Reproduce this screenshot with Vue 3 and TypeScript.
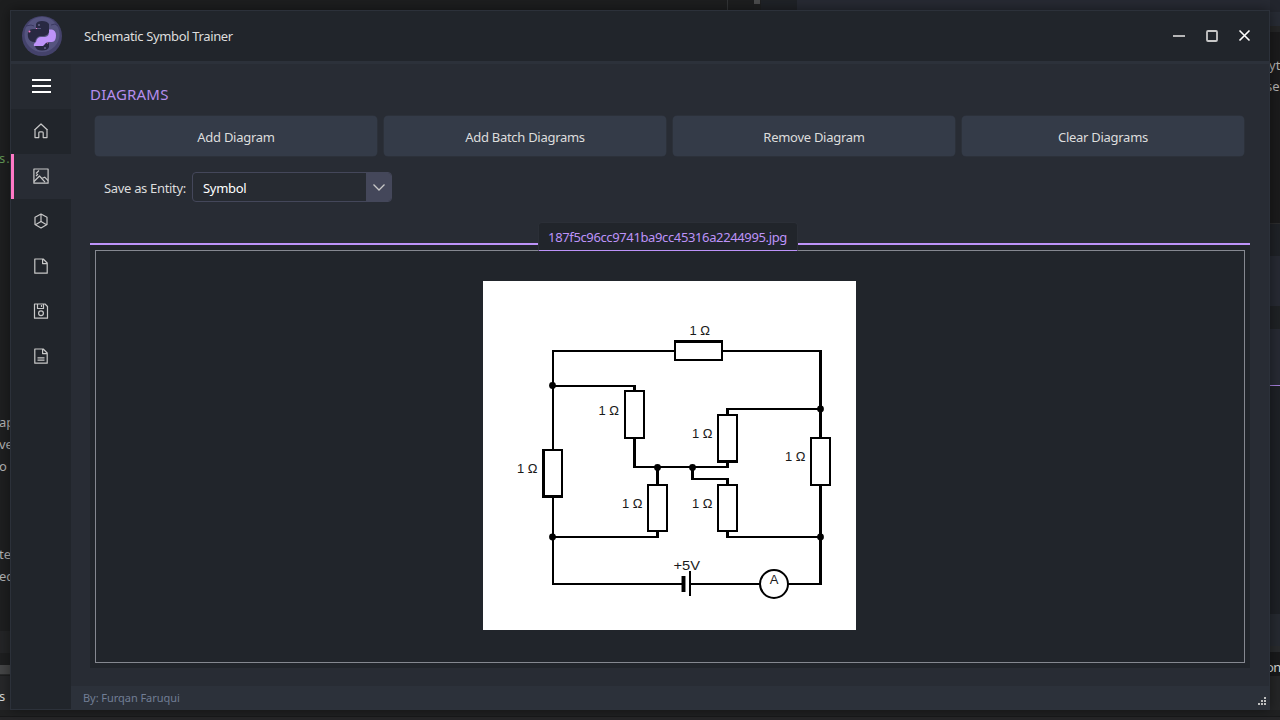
<script setup lang="ts">
interface Fragment { id: number; text: string; cls: string }
interface Rect { x: number; y: number; w: number; h: number }
interface Label { x: number; y: number; text: string; w: number }

const actions: string[] = ['Add Diagram', 'Add Batch Diagrams', 'Remove Diagram', 'Clear Diagrams']
const fragments: Fragment[] = [
  { id: 1, text: 's.', cls: 'f-green' },
  { id: 2, text: 'ap', cls: 'f-a' },
  { id: 3, text: 've', cls: 'f-b' },
  { id: 4, text: 'o', cls: 'f-c' },
  { id: 5, text: 'te', cls: 'f-d' },
  { id: 6, text: 'ed', cls: 'f-e' },
  { id: 7, text: 's', cls: 'f-f' },
  { id: 8, text: 'yt', cls: 'f-g' },
  { id: 9, text: 'se', cls: 'f-h' },
  { id: 10, text: 'on', cls: 'f-i' }
]
const menu: string[] = ['home', 'image', 'cube', 'file', 'save', 'doc']

const wires: Rect[] = [
  { x: 552, y: 350, w: 122, h: 2 }, { x: 723, y: 350, w: 98, h: 2 },
  { x: 552, y: 350, w: 2, h: 99 }, { x: 552, y: 498, w: 2, h: 87 },
  { x: 819, y: 350, w: 3, h: 87 }, { x: 819, y: 486, w: 3, h: 99 },
  { x: 552, y: 385, w: 84, h: 2 }, { x: 633, y: 385, w: 3, h: 6 },
  { x: 633, y: 438, w: 3, h: 30 }, { x: 633, y: 466, w: 96, h: 2 },
  { x: 726, y: 408, w: 95, h: 2 }, { x: 726, y: 408, w: 3, h: 6 },
  { x: 726, y: 462, w: 3, h: 6 }, { x: 656, y: 467, w: 3, h: 18 },
  { x: 691, y: 467, w: 3, h: 13 }, { x: 691, y: 478, w: 38, h: 2 },
  { x: 726, y: 478, w: 3, h: 7 }, { x: 656, y: 531, w: 3, h: 7 },
  { x: 552, y: 536, w: 107, h: 2 }, { x: 726, y: 531, w: 3, h: 7 },
  { x: 726, y: 536, w: 95, h: 2 }, { x: 552, y: 583, w: 130, h: 2 },
  { x: 690, y: 583, w: 70, h: 2 }, { x: 788, y: 583, w: 34, h: 2 },
  { x: 682, y: 576, w: 3, h: 16 }, { x: 689, y: 571, w: 2, h: 25 }
]
const outer: Rect[] = [
  { x: 674, y: 340, w: 49, h: 21 }, { x: 624, y: 390, w: 21, h: 49 },
  { x: 717, y: 414, w: 21, h: 49 }, { x: 810, y: 437, w: 21, h: 49 },
  { x: 542, y: 449, w: 21, h: 49 }, { x: 647, y: 484, w: 21, h: 48 },
  { x: 717, y: 484, w: 21, h: 48 }
]
const inner: Rect[] = [
  { x: 676, y: 343, w: 45, h: 16 }, { x: 626, y: 392, w: 17, h: 45 },
  { x: 719, y: 416, w: 17, h: 44 }, { x: 812, y: 439, w: 17, h: 45 },
  { x: 545, y: 451, w: 16, h: 44 }, { x: 649, y: 486, w: 17, h: 44 },
  { x: 719, y: 486, w: 17, h: 44 }
]
const nodes: [number, number][] = [
  [552.5, 385.5], [657.5, 467.5], [692.5, 467.5], [820.5, 409], [552.5, 537], [820.5, 537]
]
const labels: Label[] = [
  { x: 689.5, y: 335, text: '1 Ω', w: 20.5 }, { x: 598.5, y: 415, text: '1 Ω', w: 20.5 },
  { x: 692, y: 438, text: '1 Ω', w: 20.5 }, { x: 785, y: 461, text: '1 Ω', w: 20.5 },
  { x: 517, y: 473, text: '1 Ω', w: 20.5 }, { x: 622, y: 508, text: '1 Ω', w: 20.5 },
  { x: 692, y: 508, text: '1 Ω', w: 20.5 }, { x: 673.5, y: 570, text: '+5V', w: 26.5 }
]
</script>

<template>
  <div class="desktop">
    <div class="strip top-left"></div>
    <div class="strip top-gap"></div>
    <div class="strip top-scroll"></div>
    <div class="strip top-panel"></div>
    <div class="strip top-right"></div>
    <div class="strip bottom"></div>
    <div class="strip left-low"></div>
    <div class="strip left-bar"></div>
    <div class="strip left-end"></div>
    <div class="right-edge">
      <i class="r1"></i><i class="r2"></i><i class="r3"></i><i class="r4"></i><i class="r5"></i>
      <i class="r6"></i><i class="r7"></i><i class="r8"></i><i class="r9"></i><i class="r10"></i>
    </div>
    <span v-for="f in fragments" :key="f.id" class="frag" :class="f.cls">{{ f.text }}</span>

    <main class="window">
      <header class="titlebar">
        <svg class="logo" viewBox="0 0 40 40">
          <circle cx="20" cy="20" r="20" fill="#44426b" />
          <circle cx="20" cy="18.5" r="17.5" fill="#55547f" />
          <path d="M4 10l5-1 3 1M29 9l4-1 3 2" stroke="#3a3961" fill="none" />
          <path d="M14 8q1-3 6-3t7 3v7q0 4-5 5h-4q-4 1-5 6-6 0-7-5-1-8 5-8h8v-1h-5z" fill="#282942" />
          <path d="M27 13.500h3q4 1 4 6 0 6-4 6.500h-5l-3 4h-10q-1-2 2-4 1-5 5-5h4q5-1 4-7.500z" fill="#bd93f9" />
          <path d="M13 30h8l3-3h3v4q-1 3.500-7 3.500t-7-4.500z" fill="#282942" />
          <circle cx="17" cy="9" r="1" fill="#65638d" /><circle cx="23" cy="32" r="1" fill="#65638d" />
          <circle cx="7.500" cy="15.500" r="1" fill="#ff79c6" />
          <circle cx="14.500" cy="12.500" r=".6" fill="#ff79c6" /><circle cx="25.500" cy="27" r=".6" fill="#ff79c6" />
        </svg>
        <h1 class="title">Schematic Symbol Trainer</h1>
        <div class="controls">
          <svg viewBox="0 0 14 14"><path d="M1 7h12" /></svg>
          <svg viewBox="0 0 14 14"><rect x="2" y="2" width="10" height="10" rx="1" /></svg>
          <svg viewBox="0 0 14 14" class="close"><path d="M1.500 1.500l10 10M11.500 1.500L1.500 11.500" /></svg>
        </div>
      </header>

      <div class="body">
        <nav class="sidebar">
          <div class="burger"><i></i><i></i><i></i></div>
          <div v-for="m in menu" :key="m" class="item" :class="{ active: m === 'image' }">
            <svg viewBox="0 0 16 16">
              <path v-if="m === 'home'" d="M1.3 7.2L8 1l6.7 6.2M2 6.8V14.6h3.8V9.8q0-1 1-1h2.4q1 0 1 1v4.8H14V6.8" />
              <g v-else-if="m === 'image'">
                <rect x=".9" y="1" width="14.2" height="14.2" />
                <path d="M1 13.5L6.5 8l5.5 6.2M8.7 10.5L11.7 9.2l3.4 3.5M3 5.5l3-3M3 8l2-2" />
              </g>
              <path v-else-if="m === 'cube'" d="M8 1L14 4.2v7.3L8 15 2 11.5V4.2zM8 1v7.5M8 8.5L2 12M8 8.5l6 3.5" />
              <path v-else-if="m === 'file'" d="M1.8 1h8.4L14.2 5v10.2H1.8zM9.600 1v4.600h4.600" />
              <g v-else-if="m === 'save'">
                <path d="M1.5 1H12l2.5 2.5v11.7h-13zM4.5 1v4.5h6V1M8.5 2v2" />
                <circle cx="8" cy="10.3" r="2.4" />
              </g>
              <path v-else d="M1.8 1h8.4L14.2 5v10.2H1.8zM9.600 1v4.600h4.600M4.5 9.8h7M4.5 12.2h7" />
            </svg>
          </div>
        </nav>

        <section class="content">
          <div class="page">
            <h2 class="heading"><span>DIAGRAMS</span></h2>
            <div class="actions">
              <button v-for="a in actions" :key="a" type="button">{{ a }}</button>
            </div>
            <div class="entity">
              <span class="entity-label">Save as Entity:</span>
              <div class="select">
                <span>Symbol</span>
                <div class="drop"><svg viewBox="0 0 14 10"><path d="M1.5 2.500L7 8 12.5 2.500" /></svg></div>
              </div>
            </div>
            <div class="tabs">
              <div class="tab"><span>187f5c96cc9741ba9cc45316a2244995.jpg</span></div>
              <div class="pane">
                <div class="frame">
                  <svg class="diagram" viewBox="483 281 373 349">
                    <rect x="483" y="281" width="373" height="349" fill="#fff" />
                    <g shape-rendering="crispEdges">
                      <rect x="681" y="576" width="5" height="16" fill="#888" />
                      <rect v-for="(r, i) in wires" :key="'w' + i" :x="r.x" :y="r.y" :width="r.w" :height="r.h" />
                      <rect v-for="(r, i) in outer" :key="'o' + i" :x="r.x" :y="r.y" :width="r.w" :height="r.h" />
                      <rect v-for="(r, i) in inner" :key="'i' + i" :x="r.x" :y="r.y" :width="r.w" :height="r.h" fill="#fff" />
                    </g>
                    <circle v-for="(n, i) in nodes" :key="'n' + i" :cx="n[0]" :cy="n[1]" r="3.4" />
                    <circle cx="774" cy="584" r="14" fill="#fff" stroke="#000" stroke-width="2" />
                    <text v-for="(l, i) in labels" :key="'t' + i" :x="l.x" :y="l.y" :textLength="l.w" lengthAdjust="spacingAndGlyphs">{{ l.text }}</text>
                    <text x="774" y="584" text-anchor="middle">A</text>
                  </svg>
                </div>
              </div>
            </div>
          </div>
          <footer class="footer">
            <span>By: Furqan Faruqui</span>
            <svg viewBox="0 0 8 8" class="grip" shape-rendering="crispEdges">
              <path d="M6 0h2v2H6zM3 3h2v2H3zM6 3h2v2H6zM0 6h2v2H0zM3 6h2v2H3zM6 6h2v2H6z" />
            </svg>
          </footer>
        </section>
      </div>
    </main>
  </div>
</template>

<style>
body { margin: 0; overflow: hidden; }
</style>

<style scoped>
* { box-sizing: border-box; }
.desktop { position: relative; width: 1280px; height: 720px; padding: 10px; overflow: hidden; background: #1e1f20; font-family: "Noto Sans", "Open Sans", sans-serif; font-size: 13px; color: #dddddd; }
.strip, .right-edge, .frag { position: absolute; }
.top-left { left: 0; top: 0; width: 754px; height: 10px; background: #1d1e1f; }
.top-gap { left: 727px; top: 0; width: 1px; height: 10px; background: #333537; }
.top-scroll { left: 754px; top: 0; width: 6px; height: 4px; background: #4b4c4d; }
.top-panel { left: 761px; top: 0; width: 36px; height: 10px; background: #1f2227; }
.top-right { left: 797px; top: 0; width: 483px; height: 10px; background: #272a33; }
.bottom { left: 0; top: 710px; width: 1280px; height: 10px; background: linear-gradient(#202122 0 6px, #18191a 6px 7px, #262628 7px); }
.left-low { left: 0; top: 631px; width: 10px; height: 22px; background: #242527; }
.left-bar { left: 0; top: 665px; width: 10px; height: 10px; background: #454647; border-bottom: 1px solid #2a2b2c; }
.left-end { left: 0; top: 676px; width: 10px; height: 34px; background: #27282a; }
.right-edge { left: 1270px; top: 0; width: 10px; height: 710px; display: flex; flex-direction: column; background: #1c1c1d; }
.right-edge i { display: block; flex: none; width: 10px; }
.r1 { height: 12px; background: #23262e; }
.r2 { height: 14px; background: #282c35; }
.r3 { height: 6px; background: #252627; }
.r4 { height: 192px; background: #1b1b1c; border-bottom: 1px solid #2c2c2d; }
.r5 { height: 32px; background: #1f2227; }
.r6 { height: 50px; background: #272a33; }
.r7 { height: 23px; background: #1f2225; }
.r8 { height: 57px; background: #272a33; border-bottom: 1px solid #a680dc; }
.r9 { height: 260px; background: linear-gradient(#1e2126 0 228px, #262a31 228px); }
.r10 { height: 64px; background: linear-gradient(#292b2d 0 6px, #191a1b 6px 30px, #252627 30px); }
.frag { font-family: "Noto Sans", sans-serif; font-size: 13px; line-height: 18px; color: #b4b4b5; white-space: nowrap; }
.f-green { left: -1px; top: 149px; color: #629755; letter-spacing: 1px; }
.f-a { left: -1px; top: 413px; }
.f-b { left: -1px; top: 435px; }
.f-c { left: -1px; top: 457px; }
.f-d { left: -1px; top: 545px; }
.f-e { left: -1px; top: 567px; }
.f-f { left: -1px; top: 687px; color: #ddd; }
.f-g { left: 1269px; top: 56px; }
.f-h { left: 1266px; top: 77px; }
.f-i { left: 1266px; top: 658px; color: #ddd; letter-spacing: -.5px; }

.window { position: relative; width: 1260px; height: 700px; display: flex; flex-direction: column; border: 1px solid #2c313a; background: #282c34; box-shadow: 0 0 12px rgba(0, 0, 0, .45); }
.titlebar { flex: none; height: 53px; display: flex; align-items: flex-start; padding-left: 11px; background: #21252b; border-bottom: 3px solid #2c313a; }
.logo { width: 40px; height: 40px; margin-top: 5px; flex: none; }
.title { margin: 15px 0 0 22px; font-size: 13px; line-height: 20px; font-weight: 400; letter-spacing: -.36px; white-space: nowrap; }
.controls { margin: 18px 17px 0 auto; display: flex; gap: 19px; }
.controls svg { width: 14px; height: 14px; fill: none; stroke: #c8c8c8; stroke-width: 1.8; }
.controls .close { stroke: #fff; stroke-width: 1.6; }

.body { flex: 1; min-height: 0; display: flex; }
.sidebar { flex: none; width: 60px; background: #21252b; }
.burger { height: 45px; padding: 0 0 2px 1px; background: #262a31; display: flex; flex-direction: column; align-items: center; justify-content: center; gap: 4px; }
.burger i { display: block; width: 19px; height: 2px; background: #fff; }
.item { height: 45px; padding-bottom: 2px; display: flex; align-items: center; justify-content: center; }
.item.active { background: #282c34; border-left: 3px solid #ff79c6; padding-right: 3px; }
.item svg { width: 16px; height: 16px; fill: none; stroke: #c8c8c8; stroke-width: 1.2; stroke-linejoin: round; }

.content { flex: 1; min-width: 0; display: flex; flex-direction: column; }
.page { flex: 1; padding: 19px 19px 0; }
.heading { margin: 0; height: 33px; color: #b58eee; font-size: 15px; line-height: 22px; font-weight: 400; letter-spacing: .2px; }
.actions { display: flex; gap: 7px; margin: 0 6px 0 5px; }
.actions button { flex: 1; height: 40px; padding: 2px 0 0; border: 0; border-radius: 4px; background: #343b48; color: #dddddd; font-family: inherit; font-size: 13px; letter-spacing: -.28px; box-shadow: 0 0 0 .5px #303641; }
.entity { display: flex; align-items: center; margin: 16px 0 0 14px; height: 30px; }
.entity-label { width: 88px; padding-top: 2px; white-space: nowrap; letter-spacing: -.32px; }
.select { width: 200px; height: 30px; display: flex; align-items: center; justify-content: space-between; padding-left: 10px; border: 1px solid #44475a; border-radius: 4px; background: #272b32; color: #fff; overflow: hidden; }
.select span { padding-top: 2px; letter-spacing: -.3px; }
.drop { width: 25px; height: 30px; display: flex; align-items: center; justify-content: center; background: #44475a; }
.drop svg { width: 14px; height: 10px; fill: none; stroke: #c8c8c8; stroke-width: 1.3; }
.tabs { display: flex; flex-direction: column; margin-top: 20px; }
.tab { position: relative; z-index: 1; align-self: center; width: 260px; height: 29px; margin: 0 5px -8px 0; display: flex; align-items: center; justify-content: center; background: #21252b; border: 1px solid #2b2f37; border-bottom: 1px solid #bd93f9; border-radius: 4px 4px 0 0; color: #bd93f9; white-space: nowrap; }
.tab span { padding-top: 1px; letter-spacing: -.37px; }
.pane { height: 425px; padding: 5px; border-top: 2px solid #bd93f9; background: #21252b; }
.frame { height: 413px; border: 1px solid #858890; display: flex; justify-content: center; padding: 30px 1px 0 0; }
.diagram { width: 373px; height: 349px; flex: none; }
.diagram text { font-family: "Liberation Sans", Arial, sans-serif; font-size: 13px; fill: #1a1a1a; }
.footer { flex: none; height: 23px; display: flex; align-items: center; justify-content: space-between; padding: 0 3px 0 12px; background: #2c313a; color: #717e95; font-size: 11px; letter-spacing: -.05px; }
.grip { width: 8px; height: 8px; margin-top: 6px; fill: #c0c0c0; }
</style>
